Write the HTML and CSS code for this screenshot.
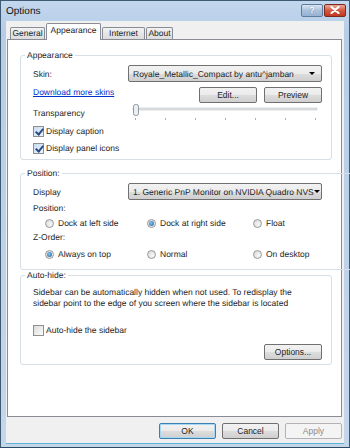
FILE: index.html
```html
<!DOCTYPE html>
<html lang="en">
<head>
    <meta charset="UTF-8">
    <title>Options</title>
    <link rel="stylesheet" href="styles.css">
</head>
<body>

    <div class="window">

        <!-- Title bar -->
        <div class="titlebar">
            <span class="title">Options</span>
            <div class="caption-buttons">
                <span class="cap-btn help">?</span>
                <span class="cap-btn close">
                    <svg width="10" height="8" viewBox="0 0 10 8">
                        <path d="M1.5 1 L8.5 7 M8.5 1 L1.5 7" stroke="#fff" stroke-width="2.2" stroke-linecap="round"/>
                    </svg>
                </span>
            </div>
        </div>

        <div class="client">

            <!-- Tabs -->
            <div class="tabs">
                <div class="tab">General</div>
                <div class="tab selected">Appearance</div>
                <div class="tab">Internet</div>
                <div class="tab">About</div>
            </div>

            <div class="panel">

                <!-- Appearance group -->
                <fieldset class="group group-appearance">
                    <legend>Appearance</legend>

                    <div class="row row-skin">
                        <span class="label">Skin:</span>
                        <div class="combo">
                            <span>Royale_Metallic_Compact by antu^jamban</span>
                            <span class="arrow"></span>
                        </div>
                    </div>

                    <div class="row row-link">
                        <a href="#" class="link">Download more skins</a>
                        <div class="btn-pair">
                            <button class="btn">Edit...</button>
                            <button class="btn">Preview</button>
                        </div>
                    </div>

                    <div class="row row-slider">
                        <span class="label">Transparency</span>
                        <svg class="slider" width="190" height="17" viewBox="0 0 190 17">
                            <rect x="2" y="4" width="184" height="2" fill="#e1e4e6" stroke="#b9bdc1" stroke-width="0.5"/>
                            <g fill="#a9adb2">
                                <rect x="4" y="14" width="1" height="2"/>
                                <rect x="34" y="14" width="1" height="2"/>
                                <rect x="64" y="14" width="1" height="2"/>
                                <rect x="94" y="14" width="1" height="2"/>
                                <rect x="124" y="14" width="1" height="2"/>
                                <rect x="154" y="14" width="1" height="2"/>
                                <rect x="184" y="14" width="1" height="2"/>
                            </g>
                            <rect x="2.5" y="0.5" width="5" height="11" rx="2" fill="#eceff1" stroke="#8f969c"/>
                        </svg>
                    </div>

                    <label class="row check">
                        <span class="box checked"></span>Display caption
                    </label>
                    <label class="row check">
                        <span class="box checked"></span>Display panel icons
                    </label>
                </fieldset>

                <!-- Position group -->
                <fieldset class="group group-position">
                    <legend>Position:</legend>

                    <div class="row row-display">
                        <span class="label">Display</span>
                        <div class="combo">
                            <span>1. Generic PnP Monitor on NVIDIA Quadro NVS</span>
                            <span class="arrow"></span>
                        </div>
                    </div>

                    <div class="row sub-label">Position:</div>
                    <div class="row radios">
                        <span class="radio"><span class="dot"></span>Dock at left side</span>
                        <span class="radio"><span class="dot on"></span>Dock at right side</span>
                        <span class="radio"><span class="dot"></span>Float</span>
                    </div>

                    <div class="row sub-label">Z-Order:</div>
                    <div class="row radios radios-z">
                        <span class="radio"><span class="dot on"></span>Always on top</span>
                        <span class="radio"><span class="dot"></span>Normal</span>
                        <span class="radio"><span class="dot"></span>On desktop</span>
                    </div>
                </fieldset>

                <!-- Auto-hide group -->
                <fieldset class="group group-autohide">
                    <legend>Auto-hide:</legend>

                    <p class="note">Sidebar can be automatically hidden when not used. To redisplay the<br>sidebar point to the edge of you screen where the sidebar is located</p>

                    <label class="row check check-autohide">
                        <span class="box"></span>Auto-hide the sidebar
                    </label>

                    <div class="row row-options">
                        <button class="btn">Options...</button>
                    </div>
                </fieldset>

            </div>

            <!-- Dialog buttons -->
            <div class="dialog-buttons">
                <button class="btn default">OK</button>
                <button class="btn">Cancel</button>
                <button class="btn disabled">Apply</button>
            </div>

        </div>
    </div>

</body>
</html>
```

FILE: styles.css
```css
* {
    box-sizing: border-box;
}

body {
    margin: 0;
    padding: 0;
    font-family: "Liberation Sans", Arial, sans-serif;
    font-size: 8.5px;
    color: #1e1e1e;
    background: #fff;
    text-rendering: geometricPrecision;
}

.window {
    width: 350px;
    height: 448px;
    display: flex;
    flex-direction: column;
    border: 1px solid #3e5a72;
    border-bottom-color: #2b4a63;
    background: linear-gradient(#c3d7ee, #b7cde7 30px, #c4d6ea);
}

/* Title bar */
.titlebar {
    height: 20px;
    display: flex;
    align-items: center;
    justify-content: space-between;
    padding: 0 3px 0 5px;
}

.title {
    font-size: 10px;
    color: #111;
}

.caption-buttons {
    display: flex;
    gap: 1px;
    margin-top: -2px;
}

.cap-btn {
    width: 22px;
    height: 13px;
    display: flex;
    align-items: center;
    justify-content: center;
    border: 1px solid #5d7d9c;
    border-radius: 2px;
    font-size: 9px;
    font-weight: bold;
    color: #fff;
}

.help {
    background: linear-gradient(#d9e6f3, #a9c1dc 50%, #96b3d3);
    text-shadow: 0 0 1px #4a6a8a;
}

.close {
    border-color: #7a2a20;
    background: linear-gradient(#e9a99a, #d4583f 50%, #c0381f);
}

/* Client area */
.client {
    flex: 1;
    display: flex;
    flex-direction: column;
    margin: 0 5px 3px 5px;
    padding: 1px 2px 0 1px;
    background: #f0f0f0;
    border-bottom: 1px solid #5bb4d6;
}

.tabs {
    height: 17px;
    display: flex;
    align-items: flex-end;
    padding-left: 3px;
    gap: 1px;
}

.tab {
    height: 12px;
    line-height: 11px;
    text-align: center;
    white-space: nowrap;
    border: 1px solid #898c95;
    border-bottom: none;
    border-radius: 2px 2px 0 0;
    background: linear-gradient(#f3f3f3, #e6e6e6 50%, #dcdcdc);
}

.tab.selected {
    position: relative;
    z-index: 1;
    height: 17px;
    margin-bottom: -1px;
    padding-top: 1px;
    background: #fff;
}

.tab:nth-child(1) { width: 35px; }
.tab:nth-child(2) { width: 55px; }
.tab:nth-child(3) { width: 43px; }
.tab:nth-child(4) { width: 27px; }

.panel {
    height: 378px;
    display: flex;
    flex-direction: column;
    padding: 10px 9px 0 12px;
    background: #fff;
    border: 1px solid #898c95;
}

/* Group boxes */
.group {
    margin: 0;
    padding: 0 9px 4px 12px;
    border: 1px solid #d5dfe5;
    border-radius: 3px;
}

.group legend {
    margin-left: -8px;
    padding: 0 2px;
    line-height: 10px;
}

.group-position {
    margin-top: 8px;
    padding-bottom: 9px;
}

.group-autohide {
    margin-top: 0;
}

.row {
    display: flex;
    align-items: center;
}

.label {
    width: 95px;
    flex-shrink: 0;
}

.combo {
    width: 194px;
    height: 17px;
    display: flex;
    align-items: center;
    justify-content: space-between;
    padding: 0 6px 0 4px;
    border: 1px solid #707070;
    border-radius: 2px;
    background: linear-gradient(#f2f2f2, #ebebeb 50%, #dddddd 51%, #cfcfcf);
    white-space: nowrap;
}

.arrow {
    width: 0;
    height: 0;
    border-left: 3px solid transparent;
    border-right: 3px solid transparent;
    border-top: 3px solid #000;
}

.row-skin {
    margin-top: 5px;
}

.row-link {
    margin-top: 5px;
    justify-content: space-between;
}

.link {
    color: #0033cc;
    text-decoration: underline;
    margin-top: -7px;
}

.btn-pair {
    display: flex;
    gap: 7px;
}

.btn {
    width: 58px;
    height: 16px;
    padding: 0;
    font-family: inherit;
    font-size: 8.5px;
    color: #1e1e1e;
    border: 1px solid #707070;
    border-radius: 2px;
    background: linear-gradient(#f2f2f2, #ebebeb 50%, #dddddd 51%, #cfcfcf);
}

.row-slider {
    margin-top: 1px;
    height: 17px;
}

.slider {
    margin-left: 3px;
}

.check {
    height: 14px;
    margin-top: 3px;
}

.box {
    width: 11px;
    height: 11px;
    margin-right: 2px;
    border: 1px solid #8e8f8f;
    background: linear-gradient(135deg, #dcdcdc, #fbfbfb);
    position: relative;
}

.box.checked {
    background: linear-gradient(135deg, #c7dcf2, #eef5fc);
}

.box.checked::after {
    content: "";
    position: absolute;
    left: 3px;
    top: 0;
    width: 3px;
    height: 6px;
    border: solid #2b4a85;
    border-width: 0 2px 2px 0;
    transform: rotate(40deg);
}

.row-display {
    margin-top: 5px;
}

.sub-label {
    height: 12px;
    margin-top: 2px;
}

.radios {
    height: 12px;
    margin-top: 3px;
    padding-left: 12px;
}

.radios-z {
    margin-top: 5px;
}

.radio {
    display: flex;
    align-items: center;
    width: 102px;
}

.radio:nth-child(2) {
    width: 106px;
}

.dot {
    width: 9px;
    height: 9px;
    margin-right: 4px;
    border-radius: 50%;
    border: 1px solid #999;
    background: radial-gradient(circle at 65% 65%, #f8f8f8, #d4d4d4);
    position: relative;
}

.dot.on::after {
    content: "";
    position: absolute;
    left: 1px;
    top: 1px;
    width: 5px;
    height: 5px;
    border-radius: 50%;
    background: radial-gradient(circle at 40% 40%, #7ec5f2, #1d5f99);
}

.note {
    margin: 7px 0 0;
    line-height: 11px;
    white-space: nowrap;
}

.check-autohide {
    margin-top: 14px;
}

.row-options {
    margin-top: 7px;
    justify-content: flex-end;
}

/* Bottom buttons */
.dialog-buttons {
    display: flex;
    justify-content: flex-end;
    gap: 6px;
    margin-top: 6px;
}

.dialog-buttons .btn {
    width: 57px;
}

.btn.default {
    border-color: #3c7fb1;
    box-shadow: inset 0 0 0 1px #a7d8f3;
}

.btn.disabled {
    color: #8d8d8d;
    border-color: #b5b2b5;
    background: #f4f4f4;
}
```
